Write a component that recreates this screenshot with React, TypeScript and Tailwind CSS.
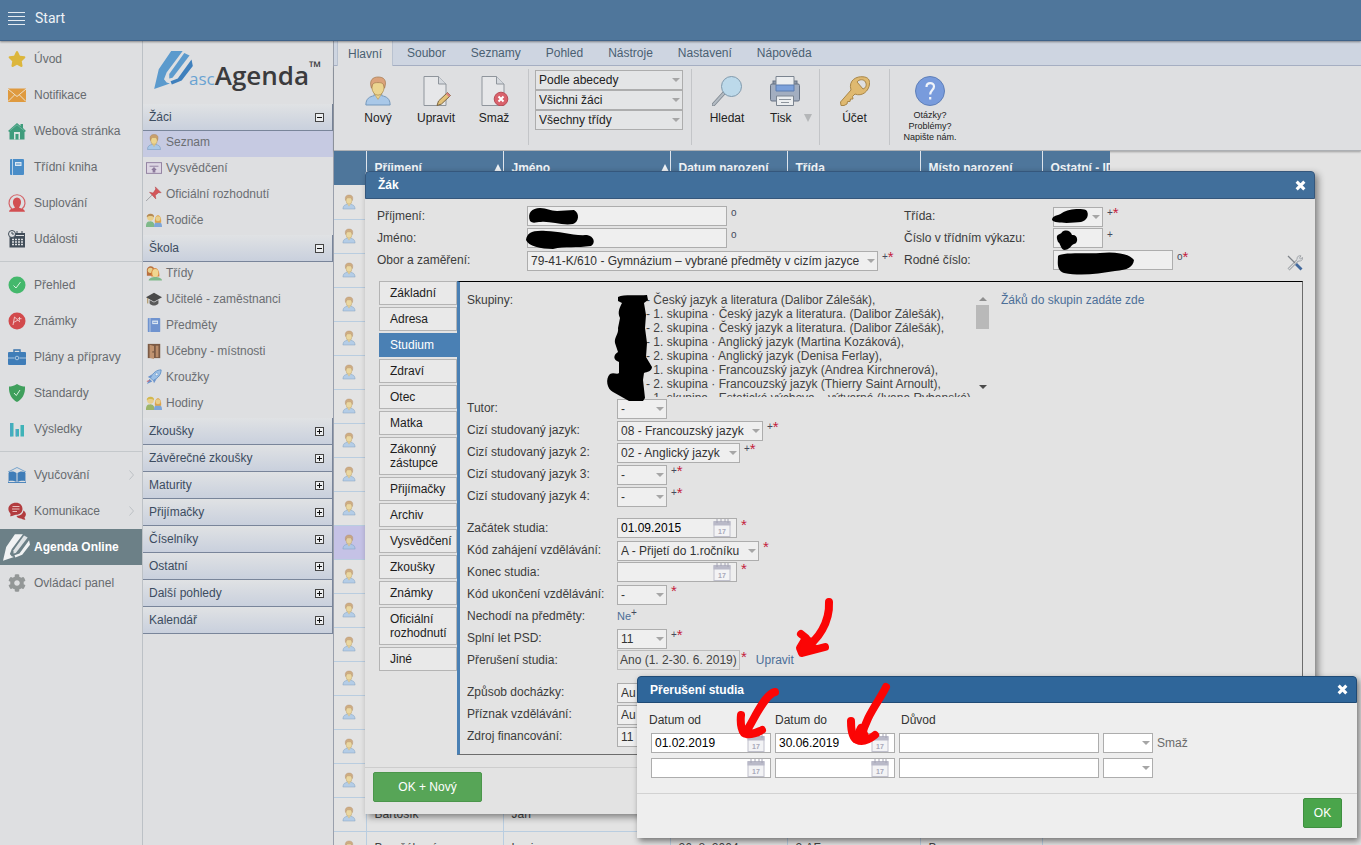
import type { ReactNode } from "react";
import { FaStar, FaCog } from "react-icons/fa";
import clsx from "clsx";

const PENCIL = [
  "M0 116 L14 56 L52 0 H87 L38 66 L30 86 L38 96 L48 99 Z",
  "M46 70 L92 6 L108 14 L56 82 L46 84 Z",
  "M50 92 L72 84 L114 26 L118 46 L84 90 L54 102 Z",
];

const Pencil = ({ className, fills }: { className: string; fills: string[] }) => (
  <svg viewBox="0 0 118 116" className={className} aria-hidden="true">
    {PENCIL.map((d, i) => (
      <path key={d} d={d} fill={fills[i]} />
    ))}
  </svg>
);

const Person = ({ className, hair = "#c9a06c" }: { className: string; hair?: string }) => (
  <svg viewBox="0 0 30 32" className={className} aria-hidden="true">
    <path d="M2 31 C2 24 6 22 11 21 V17 H19 V21 C24 22 28 24 28 31 Z" fill="#a9c8e8" stroke="#6f93b8" />
    <path d="M11 19 L15 25 L19 19 Z" fill="#ecd590" stroke="#b89a5c" strokeWidth=".7" />
    <ellipse cx="15" cy="12" rx="6.5" ry="8.5" fill="#ecd590" stroke="#b89a5c" />
    <path d="M8 13 C5 4 10 1 15 1 C21 1 25 4 22 13 C21 8 20 7 15 7 C10 7 9 8 8 13 Z" fill={hair} stroke="#a77b50" strokeWidth=".8" />
  </svg>
);

const Svg = ({ children, size = 18 }: { children: ReactNode; size?: number }) => (
  <svg viewBox="0 0 18 18" width={size} height={size} className="shrink-0" aria-hidden="true">
    {children}
  </svg>
);

const EnvelopeIcon = () => (
  <Svg>
    <rect y="2.500" width="18" height="13.500" fill="#df9a3f" />
    <path d="M0 3 L9 10.500 L18 3 M0 15.500 L6.500 9 M18 15.500 L11.500 9" stroke="#eee0c8" fill="none" />
  </Svg>
);

const HouseIcon = () => (
  <Svg>
    <path d="M0 9 L9 1 L12.500 4 V2 H15 V6 L18 9 L16.500 10 V17.500 H1.500 V10 Z" fill="#3f9c7c" />
    <path d="M2 8.500 L9 2.800 L16 8.500" stroke="#79bda6" fill="none" strokeWidth=".8" />
    <path d="M6 17.500 V10 H12 V17.500 Z" fill="#dbe4e0" />
    <path d="M7.500 17.500 V12 H10.500 V17.500 Z" fill="#3f9c7c" />
  </Svg>
);

const BookIcon = ({ color = "#4a8dc8", size = 18 }: { color?: string; size?: number }) => (
  <Svg size={size}>
    <rect x="2" y="1" width="14" height="16" rx="1" fill={color} />
    <path d="M4.500 1 V17" stroke="#d6e2ef" strokeWidth=".8" />
    <rect x="7" y="4" width="6.500" height="4" fill="#dce7f2" />
    <path d="M8 6 H12.500" stroke={color} />
  </Svg>
);

const SubstituteIcon = () => (
  <Svg>
    <path d="M4 15 A8 8 0 1 1 14 15" fill="none" stroke="#d4666a" strokeWidth="1.200" />
    <path d="M1 17.800 C2 14 5 15 7 13.500 C4 10 4 4 9 3.500 C14 4 14 10 11 13.500 C13 15 16 14 17 17.800 Z" fill="#d24f52" />
  </Svg>
);

const EventsIcon = () => (
  <Svg>
    <path d="M2 3 H17 V17.500 H1.500 V8 Z" fill="#414d59" />
    <circle cx="4" cy="4" r="3.500" fill="#dfe1e3" stroke="#414d59" />
    <path d="M4 2 V4 H6 M9 1 V4 M14 1 V4" stroke="#414d59" fill="none" />
    <path d="M8 5.500 H16" stroke="#dfe1e3" />
    <path d="M4 9.500 H15 M4 12 H15 M4 14.500 H15" stroke="#dfe1e3" strokeWidth="1.600" strokeDasharray="2 1" />
  </Svg>
);

const CheckIcon = () => (
  <Svg>
    <circle cx="9" cy="9" r="8.500" fill="#44b86c" />
    <path d="M5.500 9.500 L8 12 L12.500 6" stroke="#d8f0df" fill="none" />
  </Svg>
);

const GradeIcon = () => (
  <Svg>
    <circle cx="9" cy="9" r="8.500" fill="#d24a4c" />
    <path d="M5 13 L6.500 5 L12 10 M5.500 10.500 L10 8 M11.500 5 V8.500 M9.800 6.700 H13.500" stroke="#f3d0d0" fill="none" strokeWidth=".9" />
  </Svg>
);

const BriefcaseIcon = () => (
  <Svg>
    <path d="M6 4 V2 H12 V4" stroke="#3a74ac" fill="none" strokeWidth="1.400" />
    <rect y="4" width="18" height="13" rx="1" fill="#3f7db8" />
    <path d="M0 10 H6.500 M11.500 10 H18" stroke="#a9c6e0" />
    <circle cx="9" cy="10" r="1.800" fill="none" stroke="#a9c6e0" />
  </Svg>
);

const ShieldIcon = () => (
  <Svg>
    <path d="M9 0 C12 2 15 2.500 17 2.500 C17.500 10 14 15.500 9 18 C4 15.500 .5 10 1 2.500 C3 2.500 6 2 9 0 Z" fill="#3f9f5c" />
    <path d="M6 9 L8.300 11.500 L12 6" stroke="#d8f0df" fill="none" />
  </Svg>
);

const ResultsIcon = () => (
  <Svg>
    <path d="M2 3 H5.500 V16.500 H2 Z M7.500 9 H11 V16.500 H7.500 Z M12.500 5 H16 V16.500 H12.500 Z" fill="#3fb3b8" />
    <path d="M3 3 V16.500 M8.500 9 V16.500" stroke="#5b9bd0" strokeWidth=".8" />
  </Svg>
);

const TeachingIcon = () => (
  <Svg>
    <path d="M0 6 L9 1.500 L18 6" stroke="#74a3cc" fill="none" />
    <path d="M1 6 C4 5 7 5.500 8.500 7 V16 C6 14.500 3 14.500 1 15 Z M17 6 C14 5 11 5.500 9.500 7 V16 C12 14.500 15 14.500 17 15 Z" fill="#3f7db8" />
    <path d="M0 7 V16.500 H18 V7" stroke="#3f7db8" fill="none" strokeWidth=".9" />
  </Svg>
);

const ChatIcon = () => (
  <Svg>
    <path d="M8 .8 C12 .8 14.500 3.500 14.500 7 C14.500 10 12 12.800 8 12.800 C6.500 12.800 3 15 2 14 C3 13 2.500 12 2 11 C-2 6 2 .8 8 .8 Z" fill="#b23c3f" />
    <path d="M15.500 8.500 C19 11 18 14 16.500 15.300 C16.500 17 18 17.500 17 17.800 C15 18 14 16.500 13 16.500 C10.500 16.500 9 15.500 8.500 14 C12.500 13.800 15 12 15.500 8.500 Z" fill="#b23c3f" />
    <path d="M4.500 4.500 H11.500 M4 7 H11.500 M4.500 9.500 H9" stroke="#efcccc" strokeWidth=".9" />
  </Svg>
);

const CertificateIcon = () => (
  <Svg size={16}>
    <rect x=".5" y="3" width="17" height="12" fill="#ddd6e3" stroke="#8c7a9c" />
    <path d="M4 7 H14" stroke="#8c7a9c" />
    <path d="M9 8 L12 11 L10.500 11.500 V14 H7.500 V11.500 L6 11 Z" fill="#8c7a9c" />
  </Svg>
);

const PinIcon = () => (
  <Svg size={16}>
    <path d="M0 17 L7 10" stroke="#9b9ba0" />
    <path d="M4 7 L8 8 L11 3.500 L10.500 1 L17 7.500 L14 7.500 L10.500 10.500 L11 14.500 Z" fill="#d4565a" stroke="#b3484b" strokeWidth=".6" />
  </Svg>
);

const PairIcon = ({ left = "#b58a55", shirt = "#7fb98a" }: { left?: string; shirt?: string }) => (
  <Svg size={16}>
    <path d="M0 17 C0 11 2 11 5 10.500 C8 11 9.500 12 9.500 17 Z" fill={shirt} />
    <path d="M9 17 C9 12 11 11 13.500 11 C16 11 18 12 18 17 Z" fill="#7ea6d8" />
    <circle cx="5" cy="6" r="3.800" fill="#e8cf8c" />
    <path d="M1 6 C0 1 10 0 9 6 C7 4 3 4 1 6 Z" fill={left} />
    <path d="M10 12 C9 1 18 1 17 12 Z" fill="#dca44e" />
    <circle cx="13.500" cy="7.500" r="2.800" fill="#e8cf8c" />
  </Svg>
);

const ClassIcon = () => (
  <Svg size={16}>
    <path d="M1 7 C0 0 9 0 9 4 L8 12 H1 Z" fill="#b9703f" />
    <circle cx="5" cy="6" r="3" fill="#e8cf8c" />
    <path d="M3 17.500 C3 12 18 12 18 17.500 Z" fill="#7fb98a" />
    <path d="M6 13 C4 0 16 0 15 13 Z" fill="#d9843c" />
    <ellipse cx="10.500" cy="9" rx="3.500" ry="4.500" fill="#f0d690" />
  </Svg>
);

const CapIcon = () => (
  <Svg size={16}>
    <path d="M0 7 L9 2 L18 7 L9 12 Z" fill="#4a4a4a" />
    <path d="M4 10 V14 C7 17 11 17 14 14 V10 L9 13 Z" fill="#5a5a5a" />
    <path d="M2 8 V14" stroke="#a08040" />
  </Svg>
);

const DoorIcon = () => (
  <Svg size={16}>
    <rect x="2" y="1" width="14" height="16" fill="#7b5a45" />
    <path d="M4 2 L9 3.500 V18 L4 16.500 Z" fill="#c09370" />
    <path d="M11 3 H14 V16 H11 Z" fill="#b98c6a" />
    <circle cx="8" cy="10" r=".8" fill="#4a3528" />
  </Svg>
);

const RocketIcon = () => (
  <Svg size={16}>
    <path d="M17 1 C12 1 8 4 5 10 L8 13 C14 10 17 6 17 1 Z" fill="#9cc0e6" stroke="#5f8fc4" />
    <path d="M7 6 L2 9 L5 10.500 Z M12 11 L9 16 L8 13 Z M4 11 L1 17 L7 14 Z" fill="#6a93cc" />
    <circle cx="12" cy="6" r="1.600" fill="#e8eef5" stroke="#5f8fc4" strokeWidth=".6" />
    <path d="M1 14 L4 13" stroke="#d4565a" />
  </Svg>
);

const Calendar = () => (
  <svg viewBox="0 0 18 18" className="size-[18px] shrink-0" aria-hidden="true">
    <rect x="1" y="3" width="16" height="14.500" fill="#f3f3f5" stroke="#c0c0cc" />
    <path d="M.5 2 H17.500 V6.500 H.5 Z" fill="#b9b9c8" />
    <path d="M4 0 V4 M8 0 V3 M12 0 V3 M15 0 V4" stroke="#a4a4b4" />
    <text x="9" y="14.500" textAnchor="middle" fontSize="7" fontWeight="bold" fill="#a9a9ba" fontFamily="Liberation Sans, sans-serif">17</text>
  </svg>
);

const CloseIcon = () => (
  <svg viewBox="0 0 10 10" className="size-[11px]" aria-hidden="true">
    <path d="M1.500 1.500 L8.500 8.500 M8.500 1.500 L1.500 8.500" stroke="#fff" strokeWidth="2.800" />
  </svg>
);

const navGroups: { label: string; icon: ReactNode; arrow?: boolean }[][] = [
  [
    { label: "Úvod", icon: <FaStar className="size-[18px] text-[#dcb63c]" /> },
    { label: "Notifikace", icon: <EnvelopeIcon /> },
    { label: "Webová stránka", icon: <HouseIcon /> },
    { label: "Třídní kniha", icon: <BookIcon /> },
    { label: "Suplování", icon: <SubstituteIcon /> },
    { label: "Události", icon: <EventsIcon /> },
  ],
  [
    { label: "Přehled", icon: <CheckIcon /> },
    { label: "Známky", icon: <GradeIcon /> },
    { label: "Plány a přípravy", icon: <BriefcaseIcon /> },
    { label: "Standardy", icon: <ShieldIcon /> },
    { label: "Výsledky", icon: <ResultsIcon /> },
  ],
  [
    { label: "Vyučování", icon: <TeachingIcon />, arrow: true },
    { label: "Komunikace", icon: <ChatIcon />, arrow: true },
    { label: "Agenda Online", icon: null },
    { label: "Ovládací panel", icon: <FaCog className="size-[18px] text-[#939797]" /> },
  ],
];

const sections: { title: string; items: { label: string; icon: ReactNode }[] }[] = [
  {
    title: "Žáci",
    items: [
      { label: "Seznam", icon: <Person className="size-4" /> },
      { label: "Vysvědčení", icon: <CertificateIcon /> },
      { label: "Oficiální rozhodnutí", icon: <PinIcon /> },
      { label: "Rodiče", icon: <PairIcon /> },
    ],
  },
  {
    title: "Škola",
    items: [
      { label: "Třídy", icon: <ClassIcon /> },
      { label: "Učitelé - zaměstnanci", icon: <CapIcon /> },
      { label: "Předměty", icon: <BookIcon color="#6f93cf" size={16} /> },
      { label: "Učebny - místnosti", icon: <DoorIcon /> },
      { label: "Kroužky", icon: <RocketIcon /> },
      { label: "Hodiny", icon: <PairIcon left="#d2b84e" shirt="#9cb56a" /> },
    ],
  },
  { title: "Zkoušky", items: [] },
  { title: "Závěrečné zkoušky", items: [] },
  { title: "Maturity", items: [] },
  { title: "Přijímačky", items: [] },
  { title: "Číselníky", items: [] },
  { title: "Ostatní", items: [] },
  { title: "Další pohledy", items: [] },
  { title: "Kalendář", items: [] },
];

const menuTabs = ["Hlavní", "Soubor", "Seznamy", "Pohled", "Nástroje", "Nastavení", "Nápověda"];

const columns = [
  { name: "Příjmení", width: "w-[137px]", sort: true },
  { name: "Jméno", width: "w-[167px]", sort: true },
  { name: "Datum narození", width: "w-[117px]" },
  { name: "Třída", width: "w-[133px]" },
  { name: "Místo narození", width: "w-[122px]" },
  { name: "Ostatní - ID", width: "w-[68px]" },
];

const rows: string[][] = Array.from({ length: 20 }, () => ["", "", "", "", "", ""]);
rows[18] = ["Bartošík", "Jan", "", "", "", ""];
rows[19] = ["Baručáková", "Lucie", "26. 8. 2004", "2.AF", "Brno", ""];

const studentTabs = [
  "Základní", "Adresa", "Studium", "Zdraví", "Otec", "Matka", "Zákonný zástupce", "Přijímačky",
  "Archiv", "Vysvědčení", "Zkoušky", "Známky", "Oficiální rozhodnutí", "Jiné",
];

const groups = [
  "- Český jazyk a literatura (Dalibor Zálešák),",
  "- 1. skupina · Český jazyk a literatura. (Dalibor Zálešák),",
  "- 2. skupina · Český jazyk a literatura. (Dalibor Zálešák),",
  "- 1. skupina · Anglický jazyk (Martina Kozáková),",
  "- 2. skupina · Anglický jazyk (Denisa Ferlay),",
  "- 1. skupina · Francouzský jazyk (Andrea Kirchnerová),",
  "- 2. skupina · Francouzský jazyk (Thierry Saint Arnoult),",
  "- 1. skupina · Estetická výchova – výtvarná (Ivana Rybanská),",
];

const Marks = ({ value }: { value: string }) => (
  <span className="flex h-3 self-start pt-px pl-1 text-[12px] leading-3">
    {value.split("").map((c) => (
      <span key={c} className={c === "*" ? "pt-px text-[15px] text-[#c4203c]" : "text-[10px] leading-[14px] text-[#444a5c]"}>
        {c}
      </span>
    ))}
  </span>
);

const Row = ({ label, id, labelWidth = "w-[150px]", children }: { label: string; id?: string; labelWidth?: string; children: ReactNode }) => (
  <div className="flex h-[22px] items-center">
    <label htmlFor={id} className={clsx("shrink-0 text-[#3c3c3c]", labelWidth)}>{label}</label>
    {children}
  </div>
);

const Select = ({ id, value = "", width, name, className = "bg-[#efefef] text-[#333]" }: { id?: string; value?: string; width: string; name?: string; className?: string }) => (
  <span className={clsx("relative block self-end", width)}>
    <select id={id} aria-label={name} className={clsx("block h-5 w-full appearance-none rounded-none border border-[#adadad] px-[3px] outline-none", className)}>
      <option>{value}</option>
    </select>
    <svg viewBox="0 0 8 4" className="pointer-events-none absolute top-2 right-[3px] h-1 w-2" aria-hidden="true">
      <path d="M0 0 H8 L4 4 Z" fill="#a6a6a6" />
    </svg>
  </span>
);

const TextInput = ({ id, name, width, className = "bg-[#efefef]" }: { id?: string; name?: string; width: string; className?: string }) => (
  <input id={id} aria-label={name} type="text" className={clsx("block h-5 rounded-none border border-[#adadad] px-[3px] outline-none", width, className)} />
);

const DateInput = ({ id, name, value = "", className = "bg-[#efefef]" }: { id?: string; name?: string; value?: string; className?: string }) => (
  <span className={clsx("flex h-5 w-[120px] items-center border border-[#adadad] pr-[5px] pl-[3px]", className)}>
    <input id={id} aria-label={name} type="text" defaultValue={value} className="min-w-0 flex-1 bg-transparent text-black outline-none" />
    <Calendar />
  </span>
);

const ToolButton = ({ label, icon, width }: { label: string; icon: ReactNode; width: string }) => (
  <button type="button" className={clsx("flex flex-col items-center gap-1 pt-[7px] text-[#222]", width)}>
    {icon}
    <span className="leading-4">{label}</span>
  </button>
);

const Divider = () => <div className="h-[76px] w-px bg-[#c3c5c8]" />;

const PageIcon = ({ children }: { children: ReactNode }) => (
  <svg viewBox="0 0 30 30" className="size-[30px]" aria-hidden="true">
    <path d="M3 .5 H17.500 L25 8 V29.500 H3 Z" fill="#e6e7e9" stroke="#8f959c" />
    <path d="M17.500 .5 V8 H25" fill="#d5d9de" stroke="#8f959c" />
    {children}
  </svg>
);

const TopBar = () => (
  <header className="z-10 flex h-[41px] shrink-0 items-center gap-[10px] border-b border-[#3f6288] bg-[#4f769b] pb-1 pl-2 text-[#eef2f6] shadow-[0_1px_2px_rgba(0,0,0,0.4)]">
    <button type="button" aria-label="Menu" className="flex w-[17px] flex-col gap-[3px]">
      <span className="h-px bg-[#e4ebf2]" />
      <span className="h-px bg-[#e4ebf2]" />
      <span className="h-px bg-[#e4ebf2]" />
      <span className="h-px bg-[#e4ebf2]" />
    </button>
    <span className="text-[14px] font-[Roboto,sans-serif]">Start</span>
  </header>
);

const MainNav = () => (
  <nav className="w-[143px] shrink-0 border-r border-[#bcc1c6]">
    {navGroups.map((group, i) => (
      <ul key={group[0].label} className={clsx(i > 0 && "mt-1 border-t border-[#c4c8cb] pt-[5px]")}>
        {group.map((item) => {
          const active = item.label === "Agenda Online";
          return (
            <li key={item.label}>
              <a href="#" className={clsx("flex h-9 items-center gap-2", active ? "bg-[#6c8087] pl-[3px] font-bold text-white" : "pl-2 text-[#676b6f]")}>
                {active ? <Pencil className="-mr-1 h-[27px] w-[27px]" fills={["#f1f3f4", "#dfe3e5", "#f1f3f4"]} /> : item.icon}
                <span className="flex-1 whitespace-nowrap">{item.label}</span>
                {item.arrow && (
                  <svg viewBox="0 0 5 10" className="mr-2 h-[10px] w-[5px]" aria-hidden="true">
                    <path d="M.5 .5 L4.500 5 L.5 9.500" fill="none" stroke="#bcc0c4" />
                  </svg>
                )}
              </a>
            </li>
          );
        })}
      </ul>
    ))}
  </nav>
);

const AgendaNav = () => (
  <nav className="w-[191px] shrink-0 border-r border-[#9aa0ac]">
    <div className="flex h-[63px] pt-[10px] pl-[11px]">
      <Pencil className="h-[38px] w-[39px]" fills={["#5b9acd", "#5b9acd", "#3f80bd"]} />
      <div className="-ml-1 flex items-baseline font-['Open_Sans',sans-serif]">
        <span className="text-[17px] text-[#69a3d2]">asc</span>
        <span className="text-[26px] leading-[48px] font-semibold text-[#3b3b3d]">Agenda</span>
      </div>
      <span className="font-['Open_Sans',sans-serif] text-[16px] leading-[33px] font-bold text-[#3b3b3d]">™</span>
    </div>
    {sections.map((section) => (
      <section key={section.title}>
        <button type="button" className="flex h-[27px] w-full items-center justify-between border-r border-b border-[#79859a] bg-linear-to-b from-[#e0e2e4] to-[#c9d0dd] pr-2 pl-[6px] text-[#3c4c60]">
          {section.title}
          <svg viewBox="0 0 9 9" className="size-[9px]" aria-hidden="true">
            <rect x=".5" y=".5" width="8" height="8" fill="#eceef0" stroke="#444" />
            <path d={section.items.length ? "M2 4.500 H7" : "M2 4.500 H7 M4.500 2 V7"} stroke="#111" />
          </svg>
        </button>
        {section.items.map((item) => (
          <a key={item.label} href="#" className={clsx("flex h-[26px] items-center gap-1 pb-1 pl-[3px] text-[#6b6e72]", item.label === "Seznam" && "bg-[#c6cae2]")}>
            {item.icon}
            {item.label}
          </a>
        ))}
      </section>
    ))}
  </nav>
);

const Toolbar = () => (
  <div className="flex h-[85px] border-b border-[#adb0b4] bg-[#dedfe1] pt-[3px] pl-[15px] shadow-[0_1px_2px_rgba(0,0,0,0.3)]">
    <ToolButton label="Nový" width="w-[58px]" icon={<Person className="h-[30px] w-[28px]" hair="#dba37b" />} />
    <ToolButton
      label="Upravit"
      width="w-[58px]"
      icon={
        <PageIcon>
          <path d="M16 29.500 L17.500 25 L26.500 16.500 L29.500 19.500 L20.500 28 Z" fill="#e3c27a" stroke="#7a6540" />
          <path d="M25 18 L26.500 16.500 L29.500 19.500 L28 21 Z" fill="#d98080" />
        </PageIcon>
      }
    />
    <ToolButton
      label="Smaž"
      width="w-[58px]"
      icon={
        <PageIcon>
          <circle cx="22" cy="23" r="6.800" fill="#d9626c" stroke="#b84c56" />
          <path d="M19.500 20.500 L24.500 25.500 M24.500 20.500 L19.500 25.500" stroke="#fff" strokeWidth="2" />
        </PageIcon>
      }
    />
    <div className="ml-[5px]"><Divider /></div>
    <div className="mr-2 ml-[6px] flex w-[148px] flex-col pt-px">
      <Select name="Řazení" value="Podle abecedy" width="w-full" className="bg-[#e4e5e6] text-[#222]" />
      <Select name="Žáci" value="Všichni žáci" width="w-full" className="bg-[#e4e5e6] text-[#222]" />
      <Select name="Třídy" value="Všechny třídy" width="w-full" className="bg-[#e4e5e6] text-[#222]" />
    </div>
    <Divider />
    <ToolButton
      label="Hledat"
      width="w-[70px]"
      icon={
        <svg viewBox="0 0 30 30" className="size-[30px]" aria-hidden="true">
          <path d="M1.500 28.500 L12 17" stroke="#7e8790" strokeWidth="3.600" strokeLinecap="round" />
          <path d="M1.500 28.500 L12 17" stroke="#b3bbc3" strokeWidth="2" strokeLinecap="round" />
          <circle cx="19.500" cy="10.500" r="10" fill="#bcd9ea" stroke="#7f99ac" />
        </svg>
      }
    />
    <button type="button" className="flex w-[57px] flex-col gap-1 pt-[7px] pl-2 text-[#222]">
      <svg viewBox="0 0 30 30" className="size-[30px]" aria-hidden="true">
        <rect x="3" y="5" width="24" height="6" fill="#8d98aa" stroke="#667284" />
        <rect x=".5" y="8" width="29" height="17" rx="1.500" fill="#a3aec0" stroke="#667284" />
        <path d="M6 9 V.5 H24 V9" fill="#eceef0" stroke="#7b8490" />
        <path d="M6 9 H24 V15 H6 Z" fill="#7ba0da" stroke="#5c7cb0" />
        <path d="M6.500 20 H23.500 V29.500 H6.500 Z" fill="#eceef0" stroke="#7b8490" />
        <path d="M9 23.500 H21 M11 26.500 H19" stroke="#8d949c" />
      </svg>
      <span className="flex items-center gap-3 leading-4">
        Tisk
        <svg viewBox="0 0 8 8" className="size-2" aria-hidden="true"><path d="M0 0 H8 L4 8 Z" fill="#b4b6b8" /></svg>
      </span>
    </button>
    <Divider />
    <ToolButton
      label="Účet"
      width="w-[69px]"
      icon={
        <svg viewBox="0 0 30 30" className="size-[30px]" aria-hidden="true">
          <path d="M11 14 C8 4 17 0 23 .8 C28 1 30 4 29.500 8 C29 15 22 21 15 18 L12.500 20.500 L13 23 L10.500 23 L10 25.500 L7.500 25.500 L7 28 L4 29.500 H1 L.5 26 Z" fill="#dfb970" stroke="#a88648" />
          <path d="M17 6 C19 3 24 3 25.500 6 C27 9 26 12 23 13 Z" fill="#dedfe1" stroke="#a88648" />
        </svg>
      }
    />
    <Divider />
    <button type="button" className="flex w-20 flex-col items-center gap-1 pt-[7px] text-[9px] leading-[11px] text-[#222]">
      <svg viewBox="0 0 30 30" className="size-[30px]" aria-hidden="true">
        <circle cx="15" cy="15" r="14.500" fill="#789bdc" stroke="#5f7fb8" />
        <path d="M11.500 11 C11.500 6 19 6 19 10.500 C19 14 15.200 14 15.200 18.500 M15.200 21 V23.500" stroke="#f0f4fa" strokeWidth="2.200" fill="none" />
      </svg>
      <span>Otázky?<br />Problémy?<br />Napište nám.</span>
    </button>
  </div>
);

const StudentsTable = () => (
  <table className="w-[776px] table-fixed border-collapse text-left">
    <thead>
      <tr className="h-[34px] bg-[#4e769b] text-[#f0f3f6]">
        <th className="w-8" aria-label="Žák" />
        {columns.map((column) => (
          <th key={column.name} className={clsx("overflow-hidden border-l border-[#dfe5ec] pl-2 whitespace-nowrap", column.width)}>
            <span className="flex items-center justify-between pr-px">
              {column.name}
              {column.sort && <svg viewBox="0 0 8 8" className="size-2" aria-hidden="true"><path d="M4 0 L8 8 H0 Z" fill="#f0f3f6" /></svg>}
            </span>
          </th>
        ))}
      </tr>
    </thead>
    <tbody>
      {rows.map((cells, i) => (
        <tr key={i} className="h-[34px] border-b border-[#b9cde0] text-[#444]">
          <td className={clsx("pl-2", i === 10 && "bg-[#c5c2e6]")}><Person className="h-4 w-[14px] opacity-80" /></td>
          {cells.map((cell, j) => (
            <td key={j} className="border-l border-[#b9cde0] pl-2 whitespace-nowrap">{cell}</td>
          ))}
        </tr>
      ))}
    </tbody>
  </table>
);

const GroupList = () => (
  <div className="flex h-[108px] gap-3 leading-[14px]">
    <span className="w-[138px] shrink-0 pt-1 text-[#3c3c3c]">Skupiny:</span>
    <div className="flex w-[372px] overflow-hidden pt-1">
      <ul className="min-w-0 flex-1 pl-[29px] whitespace-nowrap text-[#444]">
        {groups.map((group) => (
          <li key={group}>{group}</li>
        ))}
      </ul>
      <div className="flex w-[13px] flex-col items-center pt-1 pb-2">
        <svg viewBox="0 0 8 4" className="h-1 w-2" aria-hidden="true"><path d="M0 4 H8 L4 0 Z" fill="#8f8f8f" /></svg>
        <div className="mt-1 h-6 w-full bg-[#b9b9b9]" />
        <svg viewBox="0 0 8 4" className="mt-auto h-1 w-2" aria-hidden="true"><path d="M0 0 H8 L4 4 Z" fill="#4b4b4b" /></svg>
      </div>
    </div>
    <a href="#" className="pt-1 text-[#4c6f98]">Žáků do skupin zadáte zde</a>
  </div>
);

const StudentDialog = () => (
  <section role="dialog" aria-label="Žák" className="absolute top-[171px] left-[365px] w-[950px] rounded-t bg-[#e3e3e3] shadow-[3px_3px_7px_rgba(0,0,0,0.45)]">
    <div className="flex h-7 items-center justify-between rounded-t border border-[#35577c] bg-[#416f9b] pr-2 pl-3 font-bold text-white">
      <h2>Žák</h2>
      <button type="button" aria-label="Zavřít"><CloseIcon /></button>
    </div>
    <div className="px-3 pt-[6px] pb-3">
      <div className="flex">
        <div className="w-[527px]">
          <Row label="Příjmení:" id="surname"><TextInput id="surname" width="w-[200px]" /><Marks value="o" /></Row>
          <Row label="Jméno:" id="first-name"><TextInput id="first-name" width="w-[200px]" /><Marks value="o" /></Row>
          <Row label="Obor a zaměření:" id="field">
            <Select id="field" value="79-41-K/610 - Gymnázium – vybrané předměty v cizím jazyce" width="w-[351px]" />
            <Marks value="+*" />
          </Row>
        </div>
        <div className="flex-1">
          <Row label="Třída:" id="class" labelWidth="w-[149px]"><Select id="class" width="w-[50px]" /><Marks value="+*" /></Row>
          <Row label="Číslo v třídním výkazu:" id="number" labelWidth="w-[149px]"><TextInput id="number" width="w-[50px]" /><Marks value="+" /></Row>
          <Row label="Rodné číslo:" id="birth-number" labelWidth="w-[149px]"><TextInput id="birth-number" width="w-[120px]" /><Marks value="o*" /></Row>
        </div>
        <button type="button" aria-label="Nastavení" className="self-end">
          <svg viewBox="0 0 16 16" className="size-4" aria-hidden="true">
            <path d="M1.500 14.500 L11 5" stroke="#8c9096" strokeWidth="2.600" />
            <path d="M1.500 14.500 L11 5" stroke="#dcdee0" strokeWidth="1.200" />
            <path d="M10 4 C10 1 12 .5 14 .8 L12.500 3 L13.500 4 L15.500 2.500 C16 5 14 6.500 11.500 6" fill="#dcdee0" stroke="#8c9096" strokeWidth=".7" />
            <path d="M1 1 L8 8" stroke="#7f848a" strokeWidth="1.200" />
            <path d="M9 9 L14.500 14.500" stroke="#41689c" strokeWidth="2.800" />
          </svg>
        </button>
      </div>
      <div className="mt-[10px] flex">
        <div role="tablist" className="ml-[2px] flex w-[78px] flex-col gap-[2px] text-[#1c1c1c]">
          {studentTabs.map((tab) => (
            <button
              key={tab}
              type="button"
              role="tab"
              aria-selected={tab === "Studium"}
              className={clsx(
                "border py-1 pl-[10px] text-left leading-[14px]",
                tab === "Studium" ? "border-[#4a80b4] bg-[#4a80b4] text-white" : "border-[#b4b4b4] bg-[#e9e9e9]"
              )}
            >
              {tab}
            </button>
          ))}
        </div>
        <div className="flex-1 border border-t-black border-r-[#6c6c6c] border-b-[#6c6c6c] border-l-[3px] border-l-[#4a80b4] px-[7px] pt-[7px] pb-[7px]">
          <GroupList />
          <Row label="Tutor:" id="tutor"><Select id="tutor" value="-" width="w-[50px]" /></Row>
          <Row label="Cizí studovaný jazyk:" id="lang1"><Select id="lang1" value="08 - Francouzský jazyk" width="w-[146px]" /><Marks value="+*" /></Row>
          <Row label="Cizí studovaný jazyk 2:" id="lang2"><Select id="lang2" value="02 - Anglický jazyk" width="w-[123px]" /><Marks value="+*" /></Row>
          <Row label="Cizí studovaný jazyk 3:" id="lang3"><Select id="lang3" value="-" width="w-[50px]" /><Marks value="+*" /></Row>
          <Row label="Cizí studovaný jazyk 4:" id="lang4"><Select id="lang4" value="-" width="w-[50px]" /><Marks value="+*" /></Row>
          <div className="my-[10px]">
            <Row label="Začátek studia:" id="start"><DateInput id="start" value="01.09.2015" /><Marks value="*" /></Row>
            <Row label="Kód zahájení vzdělávání:" id="start-code"><Select id="start-code" value="A - Přijetí do 1.ročníku" width="w-[142px]" /><Marks value="*" /></Row>
            <Row label="Konec studia:" id="end"><DateInput id="end" /><Marks value="*" /></Row>
            <Row label="Kód ukončení vzdělávání:" id="end-code"><Select id="end-code" value="-" width="w-[50px]" /><Marks value="*" /></Row>
            <Row label="Nechodí na předměty:"><a href="#" className="-mr-1 text-[11px] text-[#4c6f98]">Ne</a><Marks value="+" /></Row>
            <Row label="Splní let PSD:" id="years"><Select id="years" value="11" width="w-[50px]" /><Marks value="+*" /></Row>
            <Row label="Přerušení studia:" id="interruption">
              <output id="interruption" className="-mr-[3px] h-5 w-[123px] border border-[#bdbdbd] px-[2px] leading-[18px] whitespace-nowrap text-[#444]">Ano (1. 2-30. 6. 2019)</output>
              <Marks value="*" />
              <a href="#" className="ml-[9px] text-[#4c6f98]">Upravit</a>
            </Row>
          </div>
          <Row label="Způsob docházky:" id="attendance"><Select id="attendance" value="Au" width="w-[120px]" /></Row>
          <Row label="Příznak vzdělávání:" id="flag"><Select id="flag" value="Au" width="w-[120px]" /></Row>
          <Row label="Zdroj financování:" id="funding"><Select id="funding" value="11" width="w-[120px]" /></Row>
        </div>
      </div>
    </div>
    <div className="border-t border-[#cdcdcd] px-2 pt-1 pb-3">
      <button type="button" className="h-[30px] w-[109px] rounded-xs border border-[#4b964b] bg-[#57a557] text-white">OK + Nový</button>
    </div>
  </section>
);

const InterruptionDialog = () => (
  <section role="dialog" aria-label="Přerušení studia" className="absolute top-[676px] left-[637px] w-[720px] rounded-t bg-[#eee] shadow-[2px_3px_6px_rgba(0,0,0,0.5)]">
    <div className="flex h-[27px] items-center justify-between rounded-t border border-[#1f4a75] bg-[#2f669a] pr-2 pl-3 font-bold text-white">
      <h2>Přerušení studia</h2>
      <button type="button" aria-label="Zavřít"><CloseIcon /></button>
    </div>
    <div className="border-b border-[#d2d2d2] pt-[10px] pb-[13px]">
      <div className="mb-[3px] flex gap-1 px-3 leading-[14px] text-[#333]">
        <span className="w-[122px]">Datum od</span>
        <span className="w-[122px]">Datum do</span>
        <span className="w-[200px]">Důvod</span>
      </div>
      {[["01.02.2019", "30.06.2019"], ["", ""]].map(([from, to], i) => (
        <div key={i} className="flex h-[25px] items-center gap-1 px-[14px]">
          <DateInput name="Datum od" value={from} className="bg-white" />
          <DateInput name="Datum do" value={to} className="bg-white" />
          <TextInput name="Důvod" width="w-[200px]" className="bg-white" />
          <span className="mt-px"><Select name="Stav" width="w-[50px]" className="bg-white" /></span>
          {i === 0 && <button type="button" className="text-[#6b6b6b]">Smaž</button>}
        </div>
      ))}
    </div>
    <div className="flex justify-end pt-1 pr-[15px] pb-[10px]">
      <button type="button" className="h-[30px] w-[39px] rounded-xs border border-[#3f8f40] bg-[#4aa54b] text-white">OK</button>
    </div>
  </section>
);

// hand-drawn marks: black redactions and red arrows
const Annotations = () => (
  <svg width="1361" height="845" className="pointer-events-none absolute top-0 left-0" aria-hidden="true">
    <g fill="#000">
      <path d="M530 221 C527 213 532 208 540 208 C547 208 550 211 557 211 L574 210 C580 213 579 222 573 224 C563 226 550 221 541 222 C536 222 533 224 530 221 Z" />
      <path d="M526 240 C527 233 532 230 546 231 C560 231 572 236 587 235 C594 236 596 243 591 246 C577 248 565 246 553 249 C541 249 528 246 526 240 Z" />
      <path d="M1052 220 C1052 215 1058 216 1062 213 C1068 209 1080 208 1086 210 C1090 214 1087 221 1081 222 C1073 223 1055 224 1052 220 Z" />
      <path d="M1057 239 C1056 233 1061 235 1062 232 C1066 229 1071 231 1072 235 C1078 234 1079 243 1074 244 C1071 245 1070 250 1064 250 C1060 248 1061 244 1058 242 Z" />
      <path d="M1058 256 C1062 252 1085 254 1100 253 C1115 251 1130 254 1134 260 C1133 267 1128 270 1115 271 C1098 274 1080 276 1064 273 C1056 270 1058 262 1058 256 Z" />
      <path d="M618 297 C624 294 638 296 647 295 L648 300 L644 303 L646 315 L645 328 L647 343 L646 357 L652 367 C652 371 647 372 644 373 L643 380 L645 398 L643 401 L629 401 L613 392 C607 389 605 379 610 374 C614 372 617 375 619 373 L619 362 C613 360 613 355 618 352 L615 343 C614 337 619 334 618 328 L620 318 C617 312 620 307 622 303 L618 301 Z" />
    </g>
    <g fill="none" stroke="#fb0505" strokeWidth="8" strokeLinecap="round" strokeLinejoin="round">
      <path d="M829 602 C830 622 818 641 804 648 M801 634 L806 638 L800 648 L802 653 L825 647" />
      <path d="M803 652 L812 642 L806 640 Z M803 652 L814 648" fill="#fb0505" />
      <path d="M775 692 C766 694 757 713 749 727 M741 715 C740 724 742 734 746 734 C754 735 758 732 762 730" />
      <path d="M886 687 C878 703 866 716 861 738 M851 721 C851 730 852 738 857 740 C863 743 870 739 875 735" />
      <path d="M856 739 L861 728 L866 738 Z" fill="#fb0505" />
    </g>
  </svg>
);

export default function App() {
  return (
    <div className="relative flex h-screen flex-col overflow-hidden bg-[#e3e3e3] font-['Liberation_Sans',Arial,sans-serif] text-[12px]">
      <TopBar />
      <div className="flex min-h-0 flex-1 bg-[#dedfe1]">
        <MainNav />
        <AgendaNav />
        <main className="min-w-0 flex-1 bg-[#e3e3e3]">
          <div className="flex h-[25px] gap-[3px] border-b border-[#a9b2c6] bg-[#ced5e1] pl-[3px]">
            {menuTabs.map((tab, i) => (
              <button key={tab} type="button" className={clsx("text-[#4a5f72]", i === 0 ? "-mb-px border-x border-[#b9c2d0] bg-[#dedfe1] px-[10px]" : "px-[11px]")}>
                {tab}
              </button>
            ))}
          </div>
          <Toolbar />
          <StudentsTable />
        </main>
      </div>
      <StudentDialog />
      <InterruptionDialog />
      <Annotations />
    </div>
  );
}
